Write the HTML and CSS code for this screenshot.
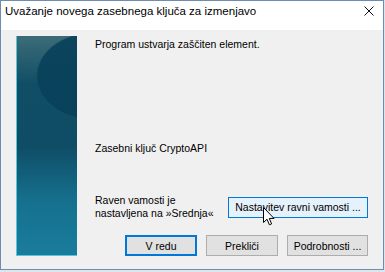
FILE: index.html
```
<!DOCTYPE html>
<html lang="sl">
<head>
    <meta charset="UTF-8">
    <title>Uvažanje novega zasebnega ključa za izmenjavo</title>
    <link rel="stylesheet" href="styles.css">
</head>
<body>
    <div class="window">
        <div class="titlebar">
            <span class="title">Uvažanje novega zasebnega ključa za izmenjavo</span>
            <svg class="close" width="10" height="10" viewBox="0 0 10 10">
                <path d="M0.5 0.5L9.5 9.5M9.5 0.5L0.5 9.5" stroke="#111" stroke-width="1" fill="none"/>
            </svg>
        </div>
        <div class="content">
            <div class="banner"></div>
            <div class="main">
                <p class="msg">Program ustvarja zaščiten element.</p>
                <p class="key">Zasebni ključ CryptoAPI</p>
                <div class="level">
                    <p class="level-text">Raven vamosti je<br>nastavljena na »Srednja«</p>
                    <button class="btn hover">Nastavitev ravni vamosti ...</button>
                </div>
                <div class="actions">
                    <button class="btn default ok">V redu</button>
                    <button class="btn cancel">Prekliči</button>
                    <button class="btn details">Podrobnosti ...</button>
                </div>
            </div>
        </div>
        <svg class="cursor" width="13" height="19" viewBox="0 0 13 19">
            <path d="M0.5 0.5V15.5L4 12.2L6.4 17.8L8.6 16.9L6.3 11.4H11L0.5 0.5Z" fill="#fff" stroke="#000" stroke-width="1" stroke-linejoin="round"/>
        </svg>
    </div>
</body>
</html>
```

FILE: styles.css
```
body {
    margin: 0;
    background: #dce4ec;
    font-family: "Liberation Sans", Arial, sans-serif;
}

.window {
    position: relative;
    width: 384px;
    height: 270px;
    box-sizing: border-box;
    border: 1px solid #6e8cae;
    background: #f0f0f0;
    display: flex;
    flex-direction: column;
}

.titlebar {
    height: 29px;
    background: #fff;
    display: flex;
    align-items: center;
    justify-content: space-between;
    padding: 0 9px 0 4px;
}

.title {
    font-size: 11.5px;
    color: #000;
    margin-top: -9px;
}

.close {
    margin-top: -9px;
}

.content {
    display: flex;
    padding: 6px 15px 0 15px;
}

.banner {
    width: 61px;
    height: 220px;
    box-sizing: border-box;
    border-left: 1px solid #55c6d8;
    border-bottom: 1px solid #55c6d8;
    background:
        radial-gradient(ellipse 90px 70px at 75px 40px, rgba(8, 64, 90, 0.9) 60%, rgba(8, 64, 90, 0) 62%),
        linear-gradient(180deg, #3c6c78 0%, #104e66 22%, #0f4c65 50%, #15708e 75%, #1a7c9c 100%);
}

.main {
    flex: 1;
    margin-left: 18px;
    display: flex;
    flex-direction: column;
    font-size: 10.5px;
    line-height: 13px;
    color: #000;
}

.main p {
    margin: 0;
}

.msg {
    margin-top: 2px !important;
}

.key {
    margin-top: 91px !important;
}

.level {
    display: flex;
    align-items: center;
    justify-content: space-between;
    margin-top: 39px;
}

.btn {
    font-family: "Liberation Sans", Arial, sans-serif;
    font-size: 10.5px;
    color: #000;
    background: #e1e1e1;
    border: 1px solid #adadad;
    height: 21px;
    padding: 0 2px;
    white-space: nowrap;
}

.hover {
    width: 140px;
    background: #e5f1fb;
    border-color: #0078d7;
}

.actions {
    display: flex;
    justify-content: flex-end;
    gap: 9px;
    margin-top: 15px;
}

.default {
    border-color: #0078d7;
    box-shadow: inset 0 0 0 1px #0078d7;
}

.ok {
    width: 72px;
}

.cancel {
    width: 72px;
}

.details {
    width: 81px;
}

.cursor {
    position: absolute;
    left: 262px;
    top: 206px;
}
```
